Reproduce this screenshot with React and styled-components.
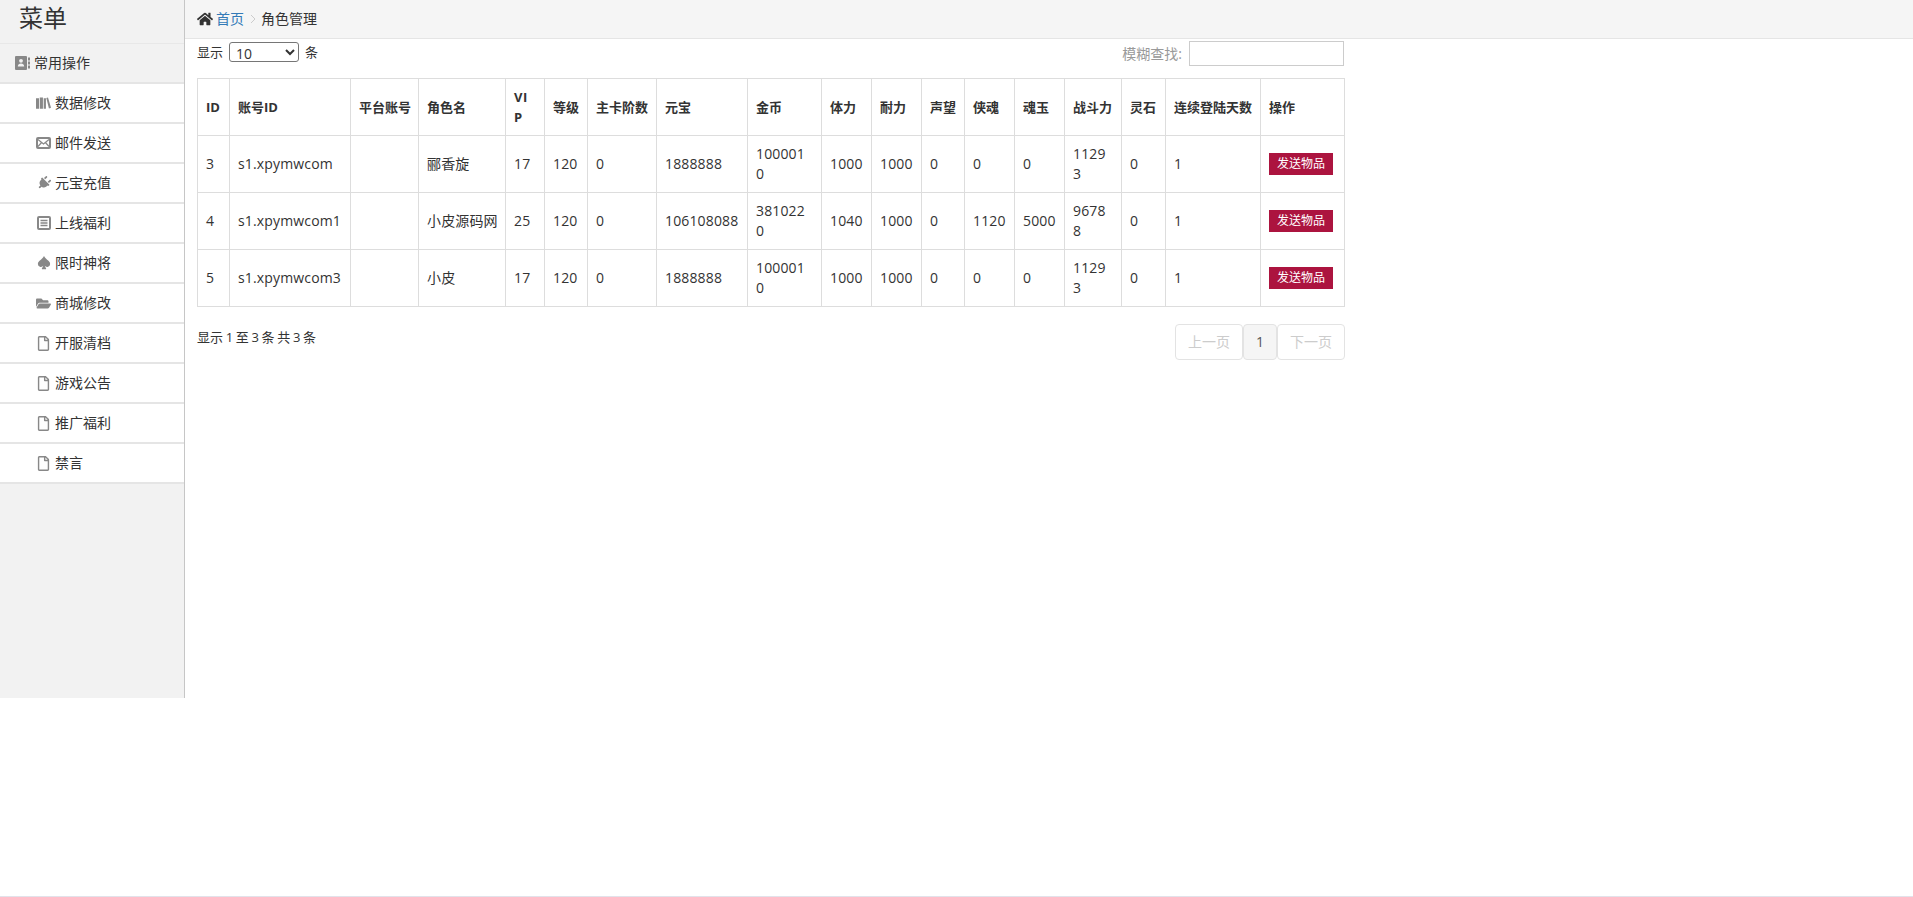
import styled, { createGlobalStyle } from "styled-components";
import { FaHome, FaPlug, FaRegFile, FaFolderOpen } from "react-icons/fa";
import { BsSuitSpadeFill } from "react-icons/bs";

const BooksIcon = () => (
  <svg width="16" height="12" viewBox="0 0 16 12" fill="currentColor">
    <path d="M0 1h3.2v11H0zM4 0h3.4v12H4zM8.2 1h2.4v11H8.2zM11 .6l1.8-.4L16 11l-2.2.8z" />
  </svg>
);

const MailIcon = () => (
  <svg width="15" height="12" viewBox="0 0 15 12" fill="none" stroke="currentColor">
    <rect x="1" y="1" width="13" height="10" rx="1" strokeWidth="2" />
    <path d="M2 2.5l5.5 4.5L13 2.5M2 9.5l3.6-4M13 9.5l-3.6-4" strokeWidth="1.2" />
  </svg>
);

const ListIcon = () => (
  <svg width="14" height="14" viewBox="0 0 14 14" fill="none" stroke="currentColor">
    <rect x="1" y="1" width="12" height="12" rx="1" strokeWidth="2" />
    <path d="M3.5 4.5h7M3.5 7h7M3.5 9.5h7" strokeWidth="1.3" />
  </svg>
);

const ContactIcon = () => (
  <svg width="15" height="14" viewBox="0 0 15 14" fill="currentColor">
    <path d="M1 0h10a1 1 0 0 1 1 1v12a1 1 0 0 1-1 1H1a1 1 0 0 1-1-1V1a1 1 0 0 1 1-1z" />
    <path d="M13 1.5h2v3h-2zM13 5.5h2v3h-2zM13 9.5h2v3h-2z" />
    <circle cx="6" cy="4.8" r="1.9" fill="#f2f2f2" />
    <path d="M2.8 10.5c0-2 1.4-3 3.2-3s3.200 1 3.200 3z" fill="#f2f2f2" />
  </svg>
);

const PlugIcon = () => <FaPlug size={14} style={{ transform: "rotate(45deg)" }} />;

const menuItems = [
  { label: "数据修改", icon: BooksIcon },
  { label: "邮件发送", icon: MailIcon },
  { label: "元宝充值", icon: PlugIcon },
  { label: "上线福利", icon: ListIcon },
  { label: "限时神将", icon: () => <BsSuitSpadeFill size={14} /> },
  { label: "商城修改", icon: () => <FaFolderOpen size={15} /> },
  { label: "开服清档", icon: () => <FaRegFile size={15} /> },
  { label: "游戏公告", icon: () => <FaRegFile size={15} /> },
  { label: "推广福利", icon: () => <FaRegFile size={15} /> },
  { label: "禁言", icon: () => <FaRegFile size={15} /> },
];

const columns = [
  { title: "ID", width: 32 },
  { title: "账号ID", width: 121 },
  { title: "平台账号", width: 68 },
  { title: "角色名", width: 87 },
  { title: "VIP", width: 39, wrap: true },
  { title: "等级", width: 43 },
  { title: "主卡阶数", width: 69 },
  { title: "元宝", width: 91 },
  { title: "金币", width: 74 },
  { title: "体力", width: 50 },
  { title: "耐力", width: 50 },
  { title: "声望", width: 43 },
  { title: "侠魂", width: 50 },
  { title: "魂玉", width: 50 },
  { title: "战斗力", width: 57 },
  { title: "灵石", width: 44 },
  { title: "连续登陆天数", width: 95 },
  { title: "操作", width: 84 },
];

const rows = [
  ["3", "s1.xpymwcom", "", "郦香旋", "17", "120", "0", "1888888", "1000010", "1000", "1000", "0", "0", "0", "11293", "0", "1"],
  ["4", "s1.xpymwcom1", "", "小皮源码网", "25", "120", "0", "106108088", "3810220", "1040", "1000", "0", "1120", "5000", "96788", "0", "1"],
  ["5", "s1.xpymwcom3", "", "小皮", "17", "120", "0", "1888888", "1000010", "1000", "1000", "0", "0", "0", "11293", "0", "1"],
];

const App = () => {
  return (
    <>
      <GlobalStyle />
      <Screen>
        <Page>
          <Sidebar>
            <MenuTitle>菜单</MenuTitle>
            <SectionHeader>
              <ContactIcon />
              <span>常用操作</span>
            </SectionHeader>
            {menuItems.map(({ label, icon: Icon }) => (
              <MenuItem key={label}>
                <IconSlot>
                  <Icon />
                </IconSlot>
                <span>{label}</span>
              </MenuItem>
            ))}
          </Sidebar>
          <Main>
            <Breadcrumb>
              <FaHome size={16} color="#333" />
              <CrumbLink>首页</CrumbLink>
              <CrumbArrow>
                <svg width="6" height="10" viewBox="0 0 6 10" fill="none" stroke="#ccc" strokeWidth="1">
                  <path d="M1 1l4 4-4 4" />
                </svg>
              </CrumbArrow>
              <span>角色管理</span>
            </Breadcrumb>
            <Content>
              <Toolbar>
                <LengthLabel>
                  显示
                  <LengthSelect defaultValue="10">
                    <option value="10">10</option>
                    <option value="25">25</option>
                    <option value="50">50</option>
                  </LengthSelect>
                  条
                </LengthLabel>
                <SearchLabel>
                  模糊查找:
                  <SearchInput type="text" />
                </SearchLabel>
              </Toolbar>
              <Table>
                <colgroup>
                  {columns.map((col) => (
                    <col key={col.title} style={{ width: col.width }} />
                  ))}
                </colgroup>
                <thead>
                  <tr>
                    {columns.map((col) => (
                      <Th key={col.title} $wrap={col.wrap}>{col.title}</Th>
                    ))}
                  </tr>
                </thead>
                <tbody>
                  {rows.map((row) => (
                    <tr key={row[0]}>
                      {row.map((cell, i) => (
                        <Td key={i} $nowrap={i === 3}>{cell}</Td>
                      ))}
                      <Td>
                        <SendButton>发送物品</SendButton>
                      </Td>
                    </tr>
                  ))}
                </tbody>
              </Table>
              <Footer>
                <Info>显示 1 至 3 条 共 3 条</Info>
                <Pagination>
                  <PageButton $disabled>上一页</PageButton>
                  <PageButton $active>1</PageButton>
                  <PageButton $disabled>下一页</PageButton>
                </Pagination>
              </Footer>
            </Content>
          </Main>
        </Page>
        <BottomEdge />
      </Screen>
    </>
  );
};

export default App;

const GlobalStyle = createGlobalStyle`
  html, body {
    margin: 0;
    padding: 0;
    background: #fff;
  }
  * {
    box-sizing: border-box;
  }
  body {
    font-family: "Open Sans", "Noto Sans CJK SC", sans-serif;
    font-size: 14px;
    line-height: 20px;
    color: #333;
  }
`;

const Screen = styled.div`
  display: flex;
  flex-direction: column;
  height: 897px;
  overflow: hidden;
`;

const Page = styled.div`
  flex: 1;
  display: flex;
  align-items: flex-start;
  width: 100%;
`;

const BottomEdge = styled.div`
  flex: 0 0 1px;
  background: #e2e2ea;
`;

const Sidebar = styled.div`
  flex: 0 0 185px;
  width: 185px;
  height: 698px;
  background: #f2f2f2;
  border-right: 1px solid #c6c6c6;
`;

const MenuTitle = styled.div`
  height: 44px;
  padding-left: 19px;
  font-size: 24px;
  line-height: 36px;
  color: #333;
  border-bottom: 1px solid #e8e8e8;
`;

const SectionHeader = styled.div`
  display: flex;
  align-items: center;
  gap: 4px;
  height: 40px;
  padding-left: 15px;
  font-size: 14px;
  color: #333;
  border-bottom: 2px solid #e5e5e5;

  svg {
    color: #888;
  }
`;

const MenuItem = styled.div`
  display: flex;
  align-items: center;
  height: 40px;
  padding-left: 36px;
  font-size: 14px;
  color: #333;
  background: #fff;
  border-bottom: 2px solid #e5e5e5;
`;

const IconSlot = styled.span`
  display: flex;
  justify-content: center;
  width: 15px;
  margin-right: 4px;
  color: #888;
`;

const Main = styled.div`
  flex: 1;
  min-width: 0;
`;

const Breadcrumb = styled.div`
  display: flex;
  align-items: center;
  height: 39px;
  padding-left: 12px;
  font-size: 14px;
  background: #f5f5f5;
  border-bottom: 1px solid #e5e5e5;
`;

const CrumbLink = styled.a`
  margin-left: 3px;
  color: #337ab7;
`;

const CrumbArrow = styled.span`
  display: flex;
  margin: 0 5px 0 6px;
`;

const Content = styled.div`
  width: 1147px;
  margin-left: 12px;
`;

const Toolbar = styled.div`
  display: flex;
  justify-content: space-between;
  align-items: flex-start;
  height: 39px;
  padding-top: 2px;
`;

const LengthLabel = styled.label`
  display: flex;
  align-items: center;
  gap: 6px;
  margin-top: 1px;
  font-size: 13px;
  color: #333;
`;

const LengthSelect = styled.select`
  width: 70px;
  height: 20px;
  padding: 0 2px;
  font-family: "Open Sans", sans-serif;
  font-size: 14px;
  color: #333;
  background: #fff;
  border: 1px solid #767676;
  border-radius: 3px;
`;

const SearchLabel = styled.label`
  display: flex;
  align-items: center;
  gap: 7px;
  font-size: 14px;
  color: #999;
`;

const SearchInput = styled.input`
  width: 155px;
  height: 25px;
  border: 1px solid #ccc;
  background: #fff;
  outline: none;
`;

const Table = styled.table`
  width: 1147px;
  table-layout: fixed;
  border-collapse: collapse;
  border: 1px solid #ddd;
`;

const Th = styled.th`
  padding: 8px;
  font-size: 13px;
  font-weight: 700;
  line-height: 20px;
  letter-spacing: ${(p) => (p.$wrap ? "0.5px" : "0")};
  text-align: left;
  vertical-align: middle;
  word-break: break-all;
  white-space: ${(p) => (p.$wrap ? "normal" : "nowrap")};
  border: 1px solid #ddd;
`;

const Td = styled.td`
  padding: 8px;
  height: 57px;
  font-size: 14px;
  line-height: 20px;
  letter-spacing: 0.15px;
  vertical-align: middle;
  word-break: break-all;
  white-space: ${(p) => (p.$nowrap ? "nowrap" : "normal")};
  border: 1px solid #ddd;
`;

const SendButton = styled.button`
  display: block;
  width: 64px;
  height: 22px;
  padding: 0;
  font-family: inherit;
  font-size: 12px;
  line-height: 22px;
  color: #fff;
  background: #ac143f;
  border: none;
`;

const Footer = styled.div`
  display: flex;
  justify-content: space-between;
  align-items: flex-start;
  margin-top: 17px;
`;

const Info = styled.div`
  margin-top: 3px;
  font-size: 13px;
  line-height: 20px;
  word-spacing: -0.7px;
`;

const Pagination = styled.div`
  display: flex;
  margin-right: -1px;
`;

const PageButton = styled.a`
  display: block;
  height: 36px;
  padding: 7px 12px;
  font-size: 14px;
  color: ${(p) => (p.$disabled ? "#ccc" : "#555")};
  background: ${(p) => (p.$active ? "#f5f5f5" : "#fff")};
  border: 1px solid #e3e3e3;
  border-radius: 4px;
`;
